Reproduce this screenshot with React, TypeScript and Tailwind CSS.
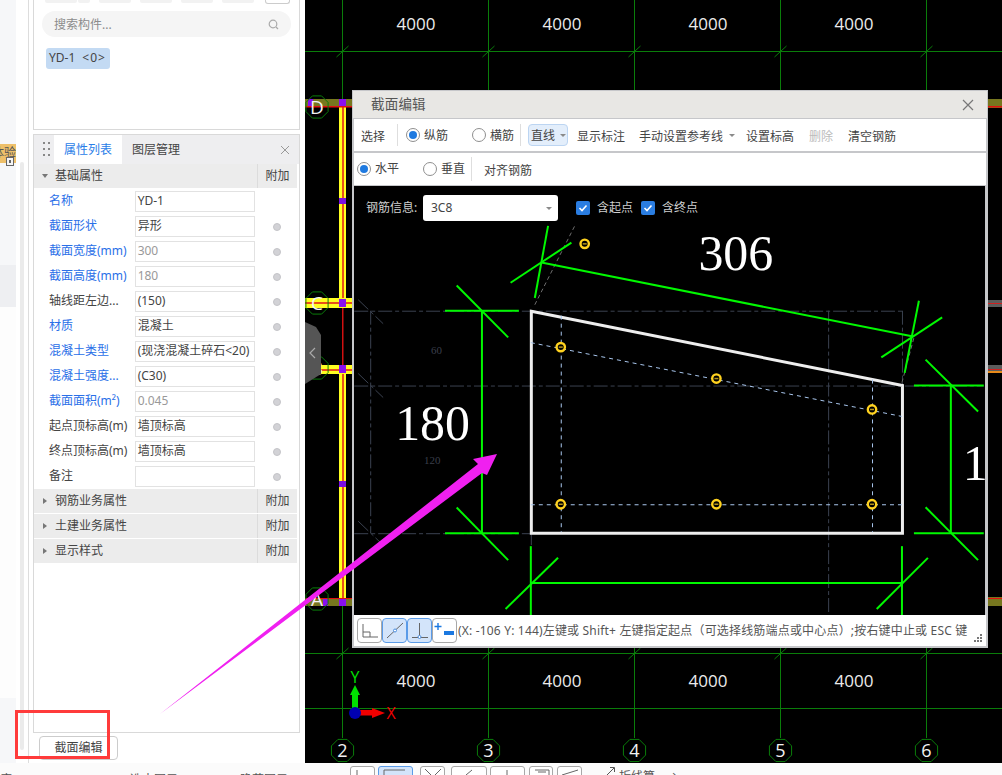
import React from "react";

const rows: { label: string; blue?: boolean; value: string; grey?: boolean; dot?: boolean }[] = [
  { label: "名称", blue: true, value: "YD-1", dot: false },
  { label: "截面形状", blue: true, value: "异形" },
  { label: "截面宽度(mm)", blue: true, value: "300", grey: true },
  { label: "截面高度(mm)", blue: true, value: "180", grey: true },
  { label: "轴线距左边...", value: "(150)" },
  { label: "材质", blue: true, value: "混凝土" },
  { label: "混凝土类型", blue: true, value: "(现浇混凝土碎石<20)" },
  { label: "混凝土强度...", blue: true, value: "(C30)" },
  { label: "截面面积(m²)", blue: true, value: "0.045", grey: true },
  { label: "起点顶标高(m)", value: "墙顶标高" },
  { label: "终点顶标高(m)", value: "墙顶标高" },
  { label: "备注", value: "" },
];

function octagon(cx: number, cy: number, r: number) {
  const pts: string[] = [];
  for (let i = 0; i < 8; i++) {
    const a = Math.PI / 8 + (i * Math.PI) / 4;
    pts.push(`${cx + r * Math.cos(a)},${cy + r * Math.sin(a)}`);
  }
  return pts.join(" ");
}

function GroupRow({ label, open }: { label: string; open?: boolean }) {
  return (
    <div className="h-[24px] mb-[1px] bg-[#ececec] flex items-center text-[12px] text-[#444]">
      <div className="w-[21px] flex justify-center">
        {open ? (
          <div className="w-0 h-0 border-x-[3px] border-x-transparent border-t-[4px] border-t-[#777]" />
        ) : (
          <div className="w-0 h-0 border-y-[3px] border-y-transparent border-l-[4px] border-l-[#777]" />
        )}
      </div>
      <span className="flex-1">{label}</span>
      <div className="w-[40px] h-full border-l border-[#dcdcdc] flex items-center justify-center">附加</div>
    </div>
  );
}

function Radio({ on }: { on?: boolean }) {
  return (
    <div className="w-[14px] h-[14px] rounded-full border border-[#8f8f8f] bg-white flex items-center justify-center shrink-0">
      {on && <div className="w-[8px] h-[8px] rounded-full bg-[#1f7ae0]" />}
    </div>
  );
}

function Check() {
  return (
    <div className="w-[14px] h-[14px] rounded-[2px] bg-[#2a7de1] flex items-center justify-center shrink-0">
      <svg width="10" height="10" viewBox="0 0 10 10">
        <path d="M1.5 5 L4 7.5 L8.5 2.5" fill="none" stroke="#fff" strokeWidth="1.6" />
      </svg>
    </div>
  );
}

function Caret() {
  return <div className="w-0 h-0 border-x-[3px] border-x-transparent border-t-[3px] border-t-[#8a8a8a]" />;
}

function MainCanvas() {
  const xs = [342.5, 488.5, 634.5, 780.5, 926.5];
  const dims = [416, 562, 708, 854];
  const g = "#0a7d0a";
  const olive = "#77771f";
  const purple = "#8a10f0";
  return (
    <svg className="absolute inset-0 w-full h-full" viewBox="305 0 697 763">
      {xs.map((x) => (
        <line key={x} x1={x} y1={0} x2={x} y2={738} stroke={g} strokeWidth="1" />
      ))}
      {[51.5, 653.5, 708.5].map((y) => (
        <line key={y} x1={305} y1={y} x2={1002} y2={y} stroke={g} strokeWidth="1" />
      ))}
      {xs.map((x) => (
        <g key={x}>
          <line x1={x - 6} y1={57} x2={x + 6} y2={46} stroke={g} />
          <line x1={x - 6} y1={659} x2={x + 6} y2={648} stroke={g} />
        </g>
      ))}
      {dims.map((x) => (
        <g key={x} fill="#ececec" fontSize="17" textAnchor="middle" fontFamily="'Open Sans','Noto Sans',sans-serif">
          <text x={x} y={30}>4000</text>
          <text x={x} y={687}>4000</text>
        </g>
      ))}
      {xs.map((x, i) => (
        <g key={x}>
          <polygon points={octagon(x, 750.5, 12)} fill="#000" stroke={g} />
          <text x={x} y={757} fill="#f2f2f2" fontSize="18" textAnchor="middle" fontFamily="'Open Sans','Noto Sans',sans-serif">
            {i + 2}
          </text>
        </g>
      ))}

      <rect x="339" y="107" width="7" height="191" fill="#ffff20" />
      <rect x="342" y="107" width="2" height="191" fill="#e8501a" />
      <rect x="342" y="306" width="1.5" height="60" fill="#d01010" />
      <rect x="339" y="372" width="7" height="226" fill="#ffff20" />
      <rect x="342" y="372" width="2" height="226" fill="#e8501a" />
      <rect x="339" y="198" width="7" height="6" fill="#7a10e0" />
      <rect x="339" y="481" width="7" height="6" fill="#7a10e0" />

      <rect x="305" y="99" width="50" height="8" fill={olive} />
      <rect x="305" y="106" width="50" height="1.5" fill="#e01010" />
      <rect x="305" y="298" width="50" height="10" fill="#ffff20" />
      <rect x="305" y="302" width="50" height="2" fill="#e8501a" />
      <rect x="321" y="365" width="34" height="9" fill="#ffff20" />
      <rect x="321" y="369" width="34" height="2" fill="#e8501a" />
      <rect x="305" y="598" width="50" height="8" fill={olive} />
      <rect x="305" y="598" width="50" height="1" fill="#e01010" />
      <rect x="308" y="99" width="5" height="7" fill={purple} />
      <rect x="339" y="99" width="7" height="7" fill={purple} />
      <rect x="339" y="299" width="7" height="8" fill={purple} />
      <rect x="339" y="365" width="7" height="8" fill={purple} />
      <rect x="323" y="599" width="5" height="7" fill={purple} />
      <rect x="339" y="599" width="7" height="7" fill={purple} />

      {[
        ["D", 107],
        ["C", 303],
        ["B", 368],
        ["A", 599],
      ].map(([t, y]) => (
        <g key={t as string}>
          <polygon points={octagon(317, y as number, 12)} fill="none" stroke={g} />
          <text x={317} y={(y as number) + 7} fill="#f2f2f2" fontSize="19" textAnchor="middle" fontFamily="'Open Sans','Noto Sans',sans-serif">
            {t}
          </text>
        </g>
      ))}

      <rect x="988" y="99" width="14" height="9" fill={olive} />
      <rect x="988" y="106" width="14" height="1.5" fill="#e01010" />
      <rect x="988" y="300" width="14" height="7" fill="#5c5c5c" />
      <rect x="988" y="303" width="14" height="1" fill="#d02020" />
      <rect x="988" y="365" width="14" height="8" fill="#5c5c5c" />
      <rect x="988" y="369" width="14" height="1" fill="#d02020" />
      <rect x="988" y="371" width="14" height="2" fill="#e88a1a" />
      <rect x="988" y="597" width="14" height="9" fill={olive} />
      <rect x="988" y="598" width="14" height="1" fill="#e01010" />

      <polygon points="305,322 316,327 321,335 321,374 305,384" fill="#555" />
      <path d="M315 348 L310 353 L315 358" fill="none" stroke="#aaa" strokeWidth="1.2" />

      <rect x="352" y="694" width="6" height="16" fill="#00e000" />
      <polygon points="355,685 360,695 350,695" fill="#00e000" />
      <text x={355} y={683} fill="#00e000" fontSize="16" textAnchor="middle" fontFamily="'Open Sans',sans-serif">Y</text>
      <rect x="358" y="710" width="18" height="5.5" fill="#f00000" />
      <polygon points="385,713 372,708 372,718" fill="#f00000" />
      <circle cx="355" cy="713" r="6" fill="#0000b0" />
      <text x={391} y={719} fill="#f00000" fontSize="16" textAnchor="middle" fontFamily="'Open Sans',sans-serif">X</text>
    </svg>
  );
}

function SectionDrawing() {
  const c = "#00f800";
  const dash = "#3b4250";
  const dots: [number, number][] = [
    [561, 347.5],
    [717, 379],
    [873, 410],
    [561, 505],
    [717, 505],
    [873, 505],
    [585, 244],
  ];
  const greens: number[][] = [
    [541.7, 262.7, 913, 336.7],
    [510.7, 283, 571.7, 242.7],
    [535, 298.3, 548.3, 226],
    [882.3, 357.7, 943.3, 317.7],
    [905.7, 373.3, 920, 301],
    [445, 311, 519, 311],
    [482, 311, 482, 534],
    [445, 534, 519, 534],
    [456.7, 285.7, 508.3, 337.7],
    [456.7, 508.3, 508.3, 561],
    [531, 547, 531, 616],
    [531, 584, 903, 584],
    [505.7, 610, 558.3, 558.7],
    [903, 547, 903, 616],
    [877.7, 610, 929, 558.7],
    [915, 386, 985, 386],
    [952, 386, 952, 534],
    [926.7, 360, 979.3, 412],
    [915, 534, 985, 534],
    [926.7, 508, 979.3, 561],
  ];
  const serif = "'Liberation Serif',serif";
  return (
    <svg className="absolute inset-0 w-full h-full" viewBox="354 186 632 430">
      <g stroke={dash} strokeWidth="1" strokeDasharray="14 3 4 3" fill="none">
        <line x1={354} y1={311.5} x2={903} y2={311.5} />
        <line x1={354} y1={386.5} x2={985} y2={386.5} />
        <line x1={354} y1={534.5} x2={531} y2={534.5} />
        <line x1={370.5} y1={311} x2={370.5} y2={534} />
        <line x1={829.5} y1={311} x2={829.5} y2={616} />
        <line x1={903.5} y1={311} x2={903.5} y2={386} />
        <line x1={531.5} y1={534} x2={531.5} y2={546} />
        <line x1={358} y1={300} x2={383} y2={324} />
        <line x1={358} y1={374} x2={383} y2={398} />
        <line x1={358} y1={522} x2={383} y2={546} />
      </g>
      <g stroke="#6d6d6d" strokeWidth="1" strokeDasharray="4 3">
        <line x1={535} y1={305} x2={575} y2={226} />
        <line x1={903} y1={383} x2={915} y2={338} />
      </g>
      <polygon points="531.5,311.5 903.5,386 903.5,534 531.5,534" fill="none" stroke="#eeeeee" strokeWidth="3" />
      <g stroke="#a9c7ee" strokeWidth="1" strokeDasharray="4 4" fill="none">
        <line x1={531} y1={343} x2={903} y2={417} />
        <line x1={561.5} y1={316} x2={561.5} y2={533} />
        <line x1={873.5} y1={380} x2={873.5} y2={533} />
        <line x1={531} y1={505.5} x2={903} y2={505.5} />
      </g>
      {greens.map((l, i) => (
        <line key={i} x1={l[0]} y1={l[1]} x2={l[2]} y2={l[3]} stroke={c} strokeWidth="2" />
      ))}
      {dots.map(([x, y]) => (
        <g key={`${x}-${y}`}>
          <circle cx={x} cy={y} r="4.2" fill="#000" stroke="#ffd21f" strokeWidth="2.4" />
          <line x1={x - 2} y1={y} x2={x + 2} y2={y} stroke="#b3941a" strokeWidth="1.5" />
        </g>
      ))}
      <text x={699} y={270} fill="#fff" fontSize="50" fontFamily={serif}>306</text>
      <text x={395} y={441} fill="#fff" fontSize="50" fontFamily={serif}>180</text>
      <text x={964} y={481} fill="#fff" fontSize="50" fontFamily={serif}>1</text>
      <text x={431} y={354} fill="#3a3f4b" fontSize="11" fontFamily={serif}>60</text>
      <text x={424} y={465} fill="#3a3f4b" fontSize="11" fontFamily={serif}>120</text>
    </svg>
  );
}

function StatusBtn({ active, children }: { active?: boolean; children: React.ReactNode }) {
  return (
    <div
      className={`w-[25px] h-[25px] rounded-[4px] border flex items-center justify-center shrink-0 ${
        active ? "bg-[#d3e4fa] border-[#5a9be8]" : "bg-white border-[#a8a8a8]"
      }`}
    >
      <svg width="21" height="21" viewBox="0 0 21 21" fill="none">
        {children}
      </svg>
    </div>
  );
}

function Dialog() {
  return (
    <div className="absolute left-[47px] top-[90px] w-[636px] h-[558px] bg-[#c6c7ca] flex flex-col pt-[1px] pb-[2px] px-[2px] text-[12px] text-[#444]">
      <div className="-mx-[1px] h-[27px] bg-[#e8e7e4] flex items-center pl-[18px] pr-[13px] text-[13.5px] text-[#555]">
        <span className="flex-1 tracking-[0.2px]">截面编辑</span>
        <svg width="12" height="12" viewBox="0 0 12 12">
          <path d="M1 1 L11 11 M11 1 L1 11" stroke="#777" strokeWidth="1.2" />
        </svg>
      </div>
      <div className="h-[32px] mt-[1px] bg-white flex items-center whitespace-nowrap">
        <span className="ml-[7px] mt-[3px]">选择</span>
        <div className="ml-[12px] w-[1px] h-[22px] bg-[#dedede]" />
        <div className="ml-[8px] -mt-[1px]"><Radio on /></div>
        <span className="ml-[4px] mt-[1px]">纵筋</span>
        <div className="ml-[24px] -mt-[1px]"><Radio /></div>
        <span className="ml-[4px] mt-[1px]">横筋</span>
        <div className="ml-[6px] w-[1px] h-[22px] bg-[#dedede]" />
        <div className="ml-[7px] w-[40px] h-[22px] rounded-[4px] bg-[#e3eefb] border border-[#bcd5f2] flex items-center pl-[2px] gap-[5px]">
          <span className="mt-[1px]">直线</span>
          <Caret />
        </div>
        <span className="ml-[9px] mt-[3px]">显示标注</span>
        <span className="ml-[14px] mt-[3px]">手动设置参考线</span>
        <div className="ml-[6px]"><Caret /></div>
        <span className="ml-[11px] mt-[3px]">设置标高</span>
        <span className="ml-[15px] mt-[3px] text-[#bbbbbb]">删除</span>
        <span className="ml-[15px] mt-[3px]">清空钢筋</span>
      </div>
      <div className="h-[32px] mt-[2px] bg-white flex items-center whitespace-nowrap">
        <div className="ml-[3px]"><Radio on /></div>
        <span className="ml-[4px]">水平</span>
        <div className="ml-[24px]"><Radio /></div>
        <span className="ml-[4px]">垂直</span>
        <div className="ml-[6px] w-[1px] h-[24px] bg-[#dedede]" />
        <span className="ml-[12px] mt-[3px]">对齐钢筋</span>
      </div>
      <div className="flex-1 mt-[1px] mr-[1px] bg-black relative overflow-hidden">
        <SectionDrawing />
        <div className="relative flex items-center h-[26px] mt-[9px] whitespace-nowrap text-[#cfcfcf]">
          <span className="ml-[12px] w-[57px]">钢筋信息:</span>
          <div className="w-[135px] h-[26px] bg-white rounded-[3px] flex items-center pl-[8px] pr-[6px] text-[#444]">
            <span className="flex-1">3C8</span>
            <Caret />
          </div>
          <div className="ml-[18px]"><Check /></div>
          <span className="ml-[7px]">含起点</span>
          <div className="ml-[8px]"><Check /></div>
          <span className="ml-[7px]">含终点</span>
        </div>
      </div>
      <div className="h-[31px] bg-white flex items-center pl-[3px] whitespace-nowrap relative">
        <StatusBtn>
          <path d="M4 4 V17 H19 M4 12 H11 V17" stroke="#666" strokeWidth="1" />
        </StatusBtn>
        <StatusBtn active>
          <path d="M3 18 L19 3" stroke="#666" strokeWidth="1" />
          <circle cx="11" cy="10.5" r="1.5" fill="#fff" stroke="#4a8ee0" />
        </StatusBtn>
        <StatusBtn active>
          <path d="M10.5 3 V16 M3 17.5 H19" stroke="#666" strokeWidth="1" />
          <circle cx="10.5" cy="17" r="1.5" fill="#fff" stroke="#4a8ee0" />
        </StatusBtn>
        <StatusBtn>
          <path d="M4 3 V10 M0.5 6.5 H7.5" stroke="#1b78e0" strokeWidth="1.4" />
          <rect x="10" y="11" width="10" height="4" fill="#1b78e0" />
        </StatusBtn>
        <span className="ml-[1px] text-[#555] tracking-[0.18px]">(X: -106 Y: 144)左键或 Shift+ 左键指定起点（可选择线筋端点或中心点）;按右键中止或 ESC 键</span>
        <svg className="absolute right-[3px] bottom-[3px]" width="9" height="9" viewBox="0 0 9 9">
          <path d="M6 0h2v2H6zM3 3h2v2H3zM6 3h2v2H6zM0 6h2v2H0zM3 6h2v2H3zM6 6h2v2H6z" fill="#777" />
        </svg>
      </div>
    </div>
  );
}

function BottomStrip() {
  const btns = [
    { w: "w-[25px]", ml: "ml-[350px]", d: "M6 3 V10 H18" },
    { w: "w-[35px]", ml: "ml-[3px]", d: "M5 3 H26 M5 3 V10", on: true },
    { w: "w-[25px]", ml: "ml-[7px]", d: "M4 2 L12 10 L20 2" },
    { w: "w-[36px]", ml: "ml-[6px]", d: "M14 8 L20 3" },
    { w: "w-[35px]", ml: "ml-[3px]", d: "M16 3 V10" },
    { w: "w-[24px]", ml: "ml-[4px]", d: "M5 3 H19 V10 M8 5 H16" },
    { w: "w-[25px]", ml: "ml-[4px]", d: "M4 8 L20 3" },
  ];
  return (
    <div className="h-[12px] bg-[#fbfbfb] relative overflow-hidden flex items-start">
      {btns.map((b, i) => (
        <div
          key={i}
          className={`${b.ml} ${b.w} h-[20px] mt-[3px] shrink-0 rounded-[3px] border ${
            b.on ? "bg-[#d3e4fa] border-[#5a9be8]" : "bg-white border-[#a8a8a8]"
          }`}
        >
          <svg width="34" height="12" viewBox="0 0 34 12" fill="none">
            <path d={b.d} stroke="#666" strokeWidth="1" />
          </svg>
        </div>
      ))}
      <svg className="ml-[24px] mt-[3px] shrink-0" width="10" height="10" viewBox="0 0 10 10" fill="none">
        <path d="M1 9 L8 2 M4 1.5 H8.5 V6" stroke="#555" strokeWidth="1" />
      </svg>
      <span className="ml-[3px] mt-[5px] text-[12px] text-[#555]">折线算</span>
      <span className="ml-[10px] mt-[5px] text-[12px] text-[#555]">→</span>
      <div className="absolute left-0 top-[8px] flex text-[12px] text-[#555] whitespace-nowrap">
        <span className="w-[36px]">度</span>
        <span className="w-[94px]">3.00 3.05</span>
        <span className="w-[110px]">选中图元: 1</span>
        <span>隐藏图元: 0</span>
      </div>
    </div>
  );
}

function LeftPanel() {
  const topBtns = [
    "ml-[11px] w-[32px]",
    "ml-[1px] w-[12px]",
    "ml-[9px] w-[32px]",
    "ml-[9px] w-[32px]",
    "ml-[9px] w-[32px]",
    "ml-[9px] w-[32px]",
  ];
  return (
    <aside className="w-[305px] shrink-0 flex bg-white relative">
      <div className="w-[16px] flex flex-col">
        <div className="h-[265px] bg-[#f6f7f9]" />
        <div className="h-[42px] bg-[#eeeff2]" />
        <div className="h-[391px] bg-[#fdfdfd]" />
        <div className="flex-1 bg-[#f6f7f9]" />
      </div>
      <div className="ml-[4px] mt-[162px] w-[4px] h-[588px] rounded-full bg-[#ebebeb]" />
      <div className="ml-[4px] w-[1px] bg-[#dddddd]" />
      <div className="ml-[4px] w-[267px] flex flex-col text-[12px] text-[#444]">
        <div className="h-[130px] border-x border-b border-[#d9d9d9] flex flex-col">
          <div className="h-[3px] flex">
            {topBtns.map((c, i) => (
              <div key={i} className={`${c} h-[3px] bg-[#f2f2f2] rounded-b-[2px]`} />
            ))}
            <div className="ml-[11px] w-[25px] h-[4px] border-x border-b border-[#cccccc] rounded-b-[3px]" />
          </div>
          <div className="mt-[8px] ml-[8px] w-[249px] h-[26px] rounded-full bg-[#f5f5f5] flex items-center pl-[12px] pr-[12px] text-[#8c8c8c]">
            <span className="flex-1 pt-[2px]">搜索构件...</span>
            <svg width="11" height="11" viewBox="0 0 11 11" fill="none">
              <circle cx="5" cy="5" r="3.8" stroke="#aaa" strokeWidth="1.2" />
              <path d="M8 8 L10 10" stroke="#aaa" strokeWidth="1.2" />
            </svg>
          </div>
          <div className="mt-[11px] ml-[12px] w-[64px] h-[21px] rounded-[3px] bg-[#c3daf3] flex items-center pl-[3px] pb-[1px] whitespace-pre text-[#444]">
            <span>YD-1</span>
            <span className="ml-[7px] tracking-[1px]">{"<0>"}</span>
          </div>
        </div>
        <div className="mt-[4px] h-[599px] border border-[#d9d9d9] flex flex-col">
          <div className="h-[29px] bg-[#eeeef0] flex items-center shrink-0 whitespace-nowrap">
            <svg className="ml-[9px] shrink-0" width="7" height="15" viewBox="0 0 7 15">
              <path d="M0 0h2v2H0zM5 0h2v2H5zM0 6h2v2H0zM5 6h2v2H5zM0 12h2v2H0zM5 12h2v2H5z" fill="#888" />
            </svg>
            <div className="ml-[4px] w-[68px] shrink-0 h-full bg-white flex items-center justify-center text-[#2a7de8]">属性列表</div>
            <span className="ml-[10px] shrink-0 text-[#444]">图层管理</span>
            <svg className="ml-[100px] shrink-0" width="10" height="10" viewBox="0 0 10 10">
              <path d="M1 1 L9 9 M9 1 L1 9" stroke="#999" strokeWidth="1" />
            </svg>
          </div>
          <div className="w-[263px]">
            <GroupRow label="基础属性" open />
            {rows.map((r) => (
              <div key={r.label} className="h-[25px] flex items-center whitespace-nowrap">
                <span className={`w-[101px] pl-[15px] pb-[2px] overflow-hidden ${r.blue ? "text-[#2a6fe8]" : "text-[#444]"}`}>{r.label}</span>
                <div
                  className={`w-[121px] h-[21px] border border-[#e2e2e2] flex items-center pl-[2px] pb-[2px] overflow-hidden ${
                    r.grey ? "text-[#999]" : "text-[#444]"
                  }`}
                >
                  {r.value}
                </div>
                <div className="w-[42px] pl-[1px] flex justify-center">
                  {r.dot !== false && <div className="w-[8px] h-[8px] rounded-full bg-[#d2d2d6] border border-[#c4c4c8]" />}
                </div>
              </div>
            ))}
            <GroupRow label="钢筋业务属性" />
            <GroupRow label="土建业务属性" />
            <GroupRow label="显示样式" />
          </div>
        </div>
        <div className="mt-[3px] ml-[6px] w-[79px] h-[24px] border border-[#cccccc] rounded-[4px] flex items-center justify-center">截面编辑</div>
      </div>
      <div className="absolute left-0 top-[144px] w-[16px] h-[19px] bg-[#eec06a] overflow-hidden flex justify-end whitespace-nowrap text-[12px] text-[#555]">
        <span>体验</span>
      </div>
      <svg className="absolute left-[6px] top-[157px]" width="8" height="9" viewBox="0 0 8 9">
        <rect x="0.5" y="0.5" width="7" height="8" fill="#f5f5f5" stroke="#666" />
        <rect x="3" y="3" width="2" height="3" fill="#666" />
      </svg>
    </aside>
  );
}

export default function App() {
  return (
    <div
      className="w-[1002px] h-[775px] relative overflow-hidden bg-white flex flex-col"
      style={{ fontFamily: "'Noto Sans','Noto Sans CJK SC',sans-serif" }}
    >
      <div className="h-[763px] flex">
        <LeftPanel />
        <main className="flex-1 bg-black relative overflow-hidden">
          <MainCanvas />
          <Dialog />
        </main>
      </div>
      <BottomStrip />
      <div className="absolute left-[15px] top-[710px] w-[95px] h-[49px] border-[3px] border-[#ff3b3b]" />
      <svg className="absolute inset-0 w-full h-full pointer-events-none" viewBox="0 0 1002 775">
        <polygon points="160,714 478,464 473,459 497,454 487,475 482,473" fill="#f020f0" />
      </svg>
    </div>
  );
}
